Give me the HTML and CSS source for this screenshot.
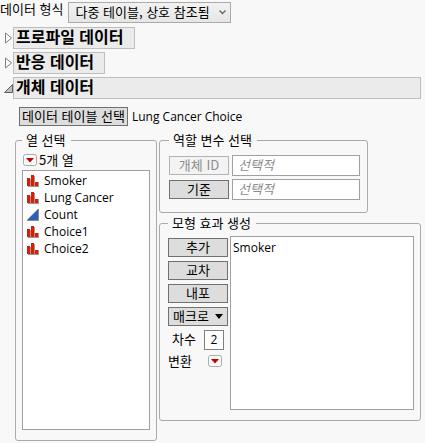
FILE: index.html
```html
<!DOCTYPE html>
<html lang="ko">
<head>
  <meta charset="UTF-8" />
  <meta name="viewport" content="width=device-width, initial-scale=1.0" />
  <title>개체 데이터</title>
  <link rel="stylesheet" href="styles.css">
</head>
<body>
  <!-- 아이콘 -->
  <svg class="sprite" aria-hidden="true">
    <symbol id="nominal" viewBox="0 0 12 12">
      <path d="M1 4h3v-3h4v6h4v5H1z" fill="#999" shape-rendering="crispEdges" />
      <path d="M0 3h3v8H0zM4 0h3v11H4zM8 7h3v4H8z" fill="#d81e05" shape-rendering="crispEdges" />
    </symbol>
    <symbol id="continuous" viewBox="0 0 12 12">
      <path d="M0 11L11 0V11z" fill="#2b62b8" />
      <path d="M0 11.5H11.5V0" fill="none" stroke="#8a8a8a" />
    </symbol>
    <symbol id="hotspot" viewBox="0 0 14 12">
      <rect x="0.5" y="0.5" width="13" height="11" rx="2" fill="#fafafa" stroke="#aaa" />
      <path d="M3 4H11L7 8.5z" fill="#c80000" />
    </symbol>
    <symbol id="closed" viewBox="0 0 9 14">
      <path d="M1.5 2V12L7.5 7z" fill="#fafafa" stroke="#808080" />
    </symbol>
    <symbol id="open" viewBox="0 0 9 14">
      <path d="M0.5 11.5H8.5V3.5z" fill="#c0c0c0" stroke="#606060" />
    </symbol>
  </svg>

  <div class="format">
    <label for="format">데이터 형식</label>
    <div class="select">
      <select id="format">
        <option>다중 테이블, 상호 참조됨</option>
      </select>
      <svg class="chevron" viewBox="0 0 7 5"><path d="M0.5 0.5L3.5 3.5L6.5 0.5" fill="none" stroke="#666" stroke-width="1.4" /></svg>
    </div>
  </div>

  <div class="outline">
    <button class="disclosure" aria-label="프로파일 데이터 열기"><svg><use href="#closed" /></svg></button>
    <h2>프로파일 데이터</h2>
  </div>
  <div class="outline">
    <button class="disclosure" aria-label="반응 데이터 열기"><svg><use href="#closed" /></svg></button>
    <h2>반응 데이터</h2>
  </div>
  <div class="outline open">
    <button class="disclosure" aria-label="개체 데이터 닫기"><svg><use href="#open" /></svg></button>
    <h2>개체 데이터</h2>
  </div>

  <main>
    <div class="table-row">
      <button class="btn table-btn">데이터 테이블 선택</button>
      <span class="latin">Lung Cancer Choice</span>
    </div>

    <div class="panels">
      <!-- 열 선택 -->
      <fieldset class="columns">
        <legend>열 선택</legend>
        <div class="count">
          <button class="hotspot" aria-label="열 옵션"><svg><use href="#hotspot" /></svg></button>
          <span>5개 열</span>
        </div>
        <ul class="list latin">
          <li><svg><use href="#nominal" /></svg>Smoker</li>
          <li><svg><use href="#nominal" /></svg>Lung Cancer</li>
          <li><svg><use href="#continuous" /></svg>Count</li>
          <li><svg><use href="#nominal" /></svg>Choice1</li>
          <li><svg><use href="#nominal" /></svg>Choice2</li>
        </ul>
      </fieldset>

      <div class="right">
        <!-- 역할 변수 -->
        <fieldset class="roles">
          <legend>역할 변수 선택</legend>
          <div class="role">
            <button class="btn" disabled>개체 ID</button>
            <input type="text" placeholder="선택적" aria-label="개체 ID">
          </div>
          <div class="role">
            <button class="btn">기준</button>
            <input type="text" placeholder="선택적" aria-label="기준">
          </div>
        </fieldset>

        <!-- 모형 효과 -->
        <fieldset class="effects">
          <legend>모형 효과 생성</legend>
          <div class="effects-body">
            <div class="actions">
              <button class="btn">추가</button>
              <button class="btn">교차</button>
              <button class="btn">내포</button>
              <button class="btn macro">매크로 <svg viewBox="0 0 8 5"><path d="M0 0H8L4 5z" /></svg></button>
              <div class="degree">
                <label for="degree">차수</label>
                <input id="degree" class="latin" type="text" value="2">
              </div>
              <div class="transform">
                <span>변환</span>
                <button class="hotspot" aria-label="변환"><svg><use href="#hotspot" /></svg></button>
              </div>
            </div>
            <ul class="list latin">
              <li>Smoker</li>
            </ul>
          </div>
        </fieldset>
      </div>
    </div>
  </main>
</body>
</html>
```

FILE: styles.css
```css
/* Estilos generales */
* {
  box-sizing: border-box;
}

body {
  margin: 0;
  padding: 2px 4px 2px 0;
  background-color: #f8f8f8;
  color: #000;
  font-family: "Noto Sans CJK KR", sans-serif;
  font-size: 13px;
  line-height: 16px;
}

button,
input,
select {
  font: inherit;
  color: inherit;
  margin: 0;
  border-radius: 0;
}

.sprite {
  display: none;
}

.latin {
  font-family: "Open Sans", "Noto Sans CJK KR", sans-serif;
  font-size: 12px;
}

/* Formato de datos */
.format {
  display: flex;
  align-items: flex-start;
  gap: 5px;
  margin-bottom: 4px;
}

.format label {
  line-height: 14px;
}

.select {
  position: relative;
}

.select select {
  appearance: none;
  width: 163px;
  height: 21px;
  padding: 0 20px 2px 6px;
  border: 1px solid #aaa;
  background: linear-gradient(#f2f2f2, #e6e6e6);
}

.chevron {
  position: absolute;
  top: 8px;
  right: 5px;
  width: 7px;
  height: 5px;
  pointer-events: none;
}

/* Secciones */
.outline {
  display: flex;
  align-items: center;
  padding-left: 4px;
  margin-bottom: 3px;
}

.outline h2 {
  margin: 0;
  height: 22px;
  padding: 0 10px 0 2px;
  border: 1px solid #bebebe;
  background-color: #ebebeb;
  font-size: 16px;
  font-weight: 600;
  line-height: 16px;
}

.outline.open h2 {
  flex: 1;
}

.disclosure,
.hotspot {
  display: flex;
  padding: 0;
  border: none;
  background: none;
}

.disclosure svg {
  width: 9px;
  height: 14px;
}

.hotspot svg {
  width: 14px;
  height: 12px;
}

/* Botones y campos */
.btn {
  width: 60px;
  height: 19px;
  padding: 0 0 2px;
  border: 1px solid #707070;
  background-color: #ddd;
  line-height: 15px;
}

.btn:disabled {
  border-color: #b4b4b4;
  background-color: #f3f3f3;
  color: #8c8c8c;
}

.table-btn {
  width: auto;
  padding: 0 2px 2px;
}

input {
  border: 1px solid #a0a0a0;
  background-color: #fff;
}

input::placeholder {
  color: #8c8c8c;
  font-style: italic;
}

main {
  padding: 5px 0 0 15px;
}

.table-row {
  display: flex;
  align-items: center;
  gap: 4px;
  padding-left: 4px;
  margin-bottom: 6px;
}

.table-row span {
  line-height: 14px;
}

.panels {
  display: flex;
  align-items: flex-start;
  gap: 2px;
}

fieldset {
  min-width: 0;
  margin: 0;
  padding: 0 6px 10px;
  border: 1px solid #aaa;
  border-radius: 3px;
}

legend {
  padding: 0 5px 0 4px;
}

.list {
  margin: 0;
  padding: 2px;
  border: 1px solid #a0a0a0;
  background-color: #fff;
  list-style: none;
}

.list li {
  display: flex;
  align-items: center;
  gap: 5px;
  line-height: 17px;
}

.list svg {
  width: 12px;
  height: 12px;
}

/* Columnas */
.columns {
  width: 142px;
}

.columns .list {
  height: 260px;
  padding: 1px 4px;
}

.count {
  display: flex;
  align-items: center;
  gap: 2px;
  padding: 4px 0 2px 1px;
}

.right {
  flex: 1;
  min-width: 0;
}

/* Roles */
.roles {
  width: 209px;
  padding: 7px 7px 12px 9px;
  margin-bottom: 2px;
}

.role {
  display: flex;
  align-items: center;
  gap: 3px;
}

.role + .role {
  margin-top: 3px;
}

.role input {
  flex: 1;
  min-width: 0;
  height: 21px;
  padding: 0 5px 2px;
}

/* Efectos */
.effects {
  padding-top: 5px;
  padding-left: 8px;
}

.effects-body {
  display: flex;
  gap: 2px;
}

.effects .list {
  flex: 1;
  height: 174px;
}

.actions {
  display: flex;
  flex-direction: column;
  gap: 4px;
  padding-top: 2px;
}

.macro {
  display: flex;
  align-items: center;
  justify-content: center;
  gap: 6px;
}

.macro svg {
  width: 8px;
  height: 5px;
  margin-top: 2px;
}

.degree,
.transform {
  display: flex;
  align-items: center;
  justify-content: space-between;
}

.degree {
  padding: 0 4px;
}

.degree label {
  padding-bottom: 3px;
}

.degree input {
  width: 20px;
  height: 20px;
  padding: 0 0 2px;
  border-color: #808080;
  text-align: center;
}

.transform {
  padding-right: 6px;
}

.transform span {
  line-height: 14px;
}
```
